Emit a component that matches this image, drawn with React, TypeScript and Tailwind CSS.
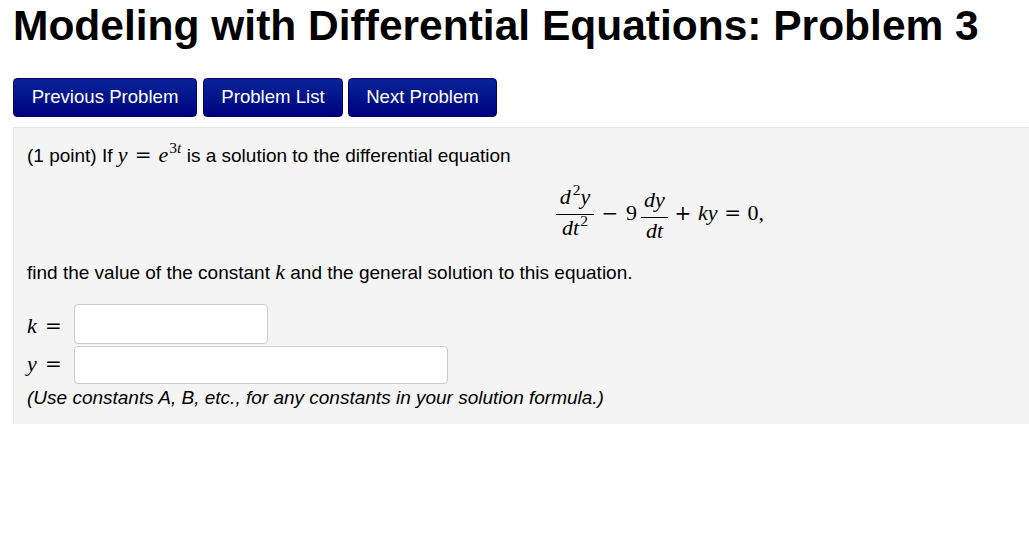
import type { ReactNode } from 'react';

const mathFont = "font-['Liberation_Serif','DejaVu_Serif',serif]";
const opFont = "font-['DejaVu_Serif',serif] text-[20px] leading-none";

const I = ({ children }: { children: ReactNode }) => (
  <span className="italic">{children}</span>
);

const Sup = ({ children, ml = 'ml-[2px]' }: { children: ReactNode; ml?: string }) => (
  <span className={`relative -top-[9px] ${ml} text-[15.5px] leading-none`}>{children}</span>
);

// operator with fixed slot width, glyph centred
const Op = ({ children, w }: { children: ReactNode; w: string }) => (
  <span className={`inline-block text-center ${opFont} ${w}`}>{children}</span>
);

const Frac = ({ num, den, w }: { num: ReactNode; den: ReactNode; w: string }) => (
  <span className={`inline-flex flex-col items-center ${w}`}>
    <span className="w-full text-center pb-[5px] leading-[24px] border-b border-black">{num}</span>
    <span className="w-full text-center pt-[1px] leading-[24px]">{den}</span>
  </span>
);

const buttons = [
  { label: 'Previous Problem', cls: 'w-[184px]' },
  { label: 'Problem List', cls: 'w-[140px] ml-[6px]' },
  { label: 'Next Problem', cls: 'w-[149px] ml-[5px]' },
];

export default function App() {
  return (
    <div className="w-[1029px] min-h-[533px] overflow-hidden bg-white text-black font-['Liberation_Sans',Arial,sans-serif]">
      {/* Title */}
      <h1 className="pl-[13px] pt-[2px] text-[42.5px] leading-[48px] font-bold whitespace-nowrap">
        Modeling with Differential Equations: Problem 3
      </h1>

      {/* Nav buttons */}
      <div className="flex pl-[13px] mt-[28px]">
        {buttons.map((b) => (
          <button
            key={b.label}
            className={`h-[39px] ${b.cls} rounded-[4px] border border-[#000066] bg-gradient-to-b from-[#0a2298] to-[#00007e] text-white text-[18.6px] leading-none`}
          >
            {b.label}
          </button>
        ))}
      </div>

      {/* Problem panel */}
      <div className="ml-[13px] mt-[10px] w-[1300px] bg-[#f4f4f4] border-t border-l border-[#e4e4e4] pl-[13px] pt-[14px] pb-[13px] text-[19px]">
        <p className="h-[27px] leading-[27px] whitespace-nowrap">
          (1 point) If{' '}
          <span className={`${mathFont} text-[22px] leading-none`}>
            <I>y</I>
            <Op w="w-[31px]">=</Op>
            <I>e</I>
            <Sup ml="ml-[1px]">
              3<I>t</I>
            </Sup>
          </span>{' '}
          is a solution to the differential equation
        </p>

        <div className="w-[1266px] h-[55px] mt-[16px] flex justify-center items-center">
          <div className={`${mathFont} text-[22px] h-[55px] flex items-center`}>
            <Frac
              w="w-[38px]"
              num={
                <>
                  <I>d</I>
                  <Sup>2</Sup>
                  <I>y</I>
                </>
              }
              den={
                <>
                  <I>dt</I>
                  <Sup ml="ml-[1px]">2</Sup>
                </>
              }
            />
            <span className="leading-[24px] whitespace-nowrap">
              <Op w="w-[32px]">−</Op>9
            </span>
            <span className="ml-[4px]">
              <Frac w="w-[27px]" num={<I>dy</I>} den={<I>dt</I>} />
            </span>
            <span className="leading-[24px] whitespace-nowrap">
              <Op w="w-[30px]">+</Op>
              <I>ky</I>
              <Op w="w-[30px]">=</Op>0,
            </span>
          </div>
        </div>

        <p className="mt-[19px] h-[27px] leading-[27px] whitespace-nowrap">
          find the value of the constant{' '}
          <span className={`${mathFont} text-[22px] leading-none`}>
            <I>k</I>
          </span>{' '}
          and the general solution to this equation.
        </p>

        <div className="mt-[18px] flex flex-col gap-[2px]">
          <div className="flex items-center">
            <span className={`${mathFont} text-[22px] leading-[24px] w-[47px] pt-[3px] whitespace-nowrap`}>
              <I>k</I>
              <Op w="w-[33px]">=</Op>
            </span>
            <input className="h-[40px] w-[194px] rounded-[4px] border border-[#cccccc] bg-white" />
          </div>
          <div className="flex items-center">
            <span className={`${mathFont} text-[22px] leading-[24px] w-[47px] pb-[3px] whitespace-nowrap`}>
              <I>y</I>
              <Op w="w-[33px]">=</Op>
            </span>
            <input className="h-[38px] w-[374px] rounded-[4px] border border-[#cccccc] bg-white" />
          </div>
        </div>

        <p className="h-[27px] leading-[27px] italic whitespace-nowrap">
          (Use constants A, B, etc., for any constants in your solution formula.)
        </p>
      </div>
    </div>
  );
}
